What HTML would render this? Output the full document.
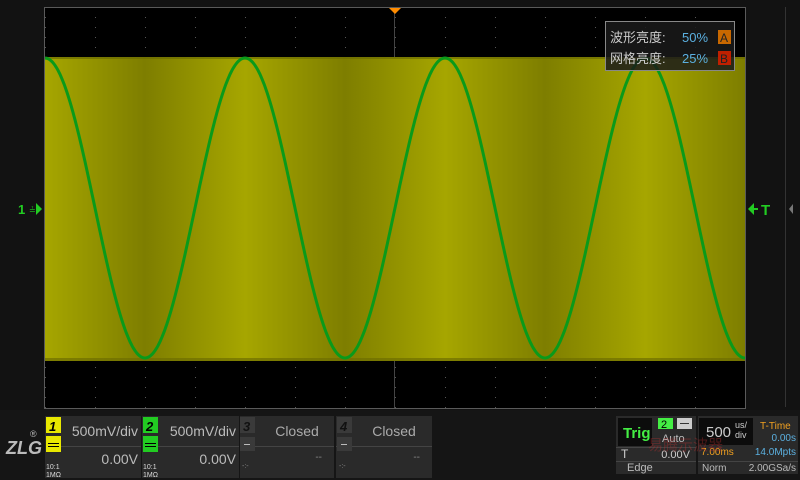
<!DOCTYPE html>
<html><head><meta charset="utf-8"><style>
body{margin:0;width:800px;height:480px;overflow:hidden;background:#111;}
svg{display:block}
text{font-family:"Liberation Sans","Noto Sans CJK SC",sans-serif}
</style></head><body>
<svg width="800" height="480" viewBox="0 0 800 480" xmlns="http://www.w3.org/2000/svg">
<defs>
<linearGradient id="band" x1="45" x2="245" y1="0" y2="0" gradientUnits="userSpaceOnUse" spreadMethod="repeat">
<stop offset="0" stop-color="#a6a600"/>
<stop offset="0.3" stop-color="#8e8e00"/>
<stop offset="0.5" stop-color="#7e7e00"/>
<stop offset="0.7" stop-color="#8e8e00"/>
<stop offset="1" stop-color="#a6a600"/>
</linearGradient>
<pattern id="vdots" x="45" y="7" width="50" height="10" patternUnits="userSpaceOnUse">
<rect x="0" y="0" width="1" height="1" fill="#555"/>
</pattern>
</defs>
<rect width="800" height="480" fill="#121212"/>
<rect x="785" y="7" width="1" height="400" fill="#333"/>
<polygon points="793,204 793,214 789,209" fill="#777"/>
<!-- screen -->
<rect x="44" y="7" width="702" height="402" fill="#5a5a5a"/>
<rect x="45" y="8" width="700" height="400" fill="#000"/>
<rect x="45" y="8" width="700" height="400" fill="url(#vdots)"/>
<rect x="394" y="8" width="1" height="400" fill="#444"/>
<rect x="45" y="57" width="700" height="304" fill="url(#band)"/>
<rect x="45" y="57" width="700" height="2" fill="#6e6e00" opacity="0.7"/>
<rect x="45" y="358" width="700" height="3" fill="#6e6e00" opacity="0.7"/>
<path id="sine" fill="none" stroke="#0a9a1a" stroke-width="3" d=""/>
<polygon points="389,8 401,8 395,14" fill="#ff8c00"/>
<!-- left markers -->
<text x="18" y="214" font-size="13" fill="#22cc22" font-weight="bold">1</text>
<text x="29" y="213" font-size="8" fill="#22cc22">≟</text>
<polygon points="36,203 42,209 36,215" fill="#22cc22"/>
<polygon points="748,209 754,203 754,215" fill="#22cc22"/>
<rect x="752" y="208" width="6" height="2" fill="#22cc22"/>
<text x="761" y="215" font-size="15" fill="#22cc22" font-weight="bold">T</text>
<!-- brightness popup -->
<rect x="605.5" y="21.5" width="129" height="49" fill="#1a1a1a" fill-opacity="0.85" stroke="#888"/>
<text x="610" y="42" font-size="13" fill="#ccc">波形亮度:</text>
<text x="682" y="42" font-size="13" fill="#5bb0e0">50%</text>
<rect x="718" y="30" width="13" height="14" fill="#c86800"/>
<text x="720" y="42" font-size="12" fill="#222">A</text>
<text x="610" y="63" font-size="13" fill="#ccc">网格亮度:</text>
<text x="682" y="63" font-size="13" fill="#5bb0e0">25%</text>
<rect x="718" y="51" width="13" height="14" fill="#c02000"/>
<text x="720" y="63" font-size="12" fill="#222">B</text>
<!-- bottom bar -->
<rect x="0" y="410" width="800" height="70" fill="#151515"/>
<text x="6" y="454" font-size="18" fill="#bbb" font-style="italic" font-weight="bold">ZLG</text>
<text x="30" y="437" font-size="9" fill="#bbb">®</text>
<!-- ch1 -->
<rect x="45" y="416" width="96" height="62" fill="#2a2a2a"/>
<rect x="61" y="446" width="80" height="1" fill="#444"/>
<rect x="46" y="417" width="15" height="16" fill="#e8e800"/>
<text x="49" y="431" font-size="13" fill="#000" font-style="italic" font-weight="bold">1</text>
<rect x="46" y="436" width="15" height="16" fill="#e8e800"/>
<rect x="48" y="443" width="11" height="1" fill="#000"/><rect x="48" y="446" width="11" height="1" fill="#000"/>
<text x="138" y="436" font-size="14" fill="#bbb" text-anchor="end">500mV/div</text>
<text x="138" y="464" font-size="14" fill="#bbb" text-anchor="end">0.00V</text>
<text x="46" y="469" font-size="7" fill="#ddd">10:1</text>
<text x="46" y="477" font-size="7" fill="#ddd">1MΩ</text>
<!-- ch2 -->
<rect x="142" y="416" width="97" height="62" fill="#2a2a2a"/>
<rect x="158" y="446" width="81" height="1" fill="#444"/>
<rect x="143" y="417" width="15" height="16" fill="#22cc22"/>
<text x="146" y="431" font-size="13" fill="#000" font-style="italic" font-weight="bold">2</text>
<rect x="143" y="436" width="15" height="16" fill="#22cc22"/>
<rect x="145" y="443" width="11" height="1" fill="#000"/><rect x="145" y="446" width="11" height="1" fill="#000"/>
<text x="236" y="436" font-size="14" fill="#bbb" text-anchor="end">500mV/div</text>
<text x="236" y="464" font-size="14" fill="#bbb" text-anchor="end">0.00V</text>
<text x="143" y="469" font-size="7" fill="#ddd">10:1</text>
<text x="143" y="477" font-size="7" fill="#ddd">1MΩ</text>
<!-- ch3 -->
<rect x="240" y="416" width="94" height="62" fill="#2a2a2a"/>
<rect x="240" y="446" width="94" height="1" fill="#444"/>
<rect x="240" y="417" width="15" height="16" fill="#3a3a3a"/>
<text x="243" y="431" font-size="13" fill="#111" font-style="italic" font-weight="bold">3</text>
<rect x="240" y="437" width="15" height="14" fill="#3a3a3a"/>
<rect x="244" y="444" width="6" height="1" fill="#bbb"/>
<text x="297" y="436" font-size="14" fill="#aaa" text-anchor="middle">Closed</text>
<text x="322" y="460" font-size="10" fill="#888" text-anchor="end">--</text>
<text x="242" y="468" font-size="7" fill="#888">-:-</text>
<!-- ch4 -->
<rect x="336" y="416" width="96" height="62" fill="#2a2a2a"/>
<rect x="336" y="446" width="96" height="1" fill="#444"/>
<rect x="337" y="417" width="15" height="16" fill="#3a3a3a"/>
<text x="340" y="431" font-size="13" fill="#111" font-style="italic" font-weight="bold">4</text>
<rect x="337" y="437" width="15" height="14" fill="#3a3a3a"/>
<rect x="341" y="444" width="6" height="1" fill="#bbb"/>
<text x="394" y="436" font-size="14" fill="#aaa" text-anchor="middle">Closed</text>
<text x="420" y="460" font-size="10" fill="#888" text-anchor="end">--</text>
<text x="339" y="468" font-size="7" fill="#888">-:-</text>
<!-- trigger -->
<rect x="616" y="416" width="80" height="58" fill="#2a2a2a"/>
<rect x="618" y="418" width="34" height="28" fill="#0c0c0c"/>
<text x="623" y="438" font-size="15" fill="#44ee44" font-weight="bold">Trig</text>
<rect x="658" y="418" width="15" height="11" fill="#44ee44"/>
<text x="661" y="428" font-size="11" fill="#000">2</text>
<rect x="677" y="418" width="15" height="11" fill="#ccc"/>
<rect x="680" y="423" width="9" height="1" fill="#333"/>
<text x="662" y="442" font-size="11" fill="#bbb">Auto</text>
<rect x="616" y="447" width="80" height="1" fill="#444"/>
<text x="621" y="458" font-size="12" fill="#ccc">T</text>
<text x="690" y="458" font-size="11" fill="#ccc" text-anchor="end">0.00V</text>
<rect x="616" y="461" width="80" height="1" fill="#444"/>
<text x="627" y="471" font-size="11" fill="#bbb">Edge</text>
<!-- timebase -->
<rect x="698" y="416" width="100" height="58" fill="#2a2a2a"/>
<rect x="699" y="418" width="54" height="27" fill="#0c0c0c"/>
<text x="706" y="437" font-size="15" fill="#ccc">500</text>
<text x="735" y="428" font-size="9" fill="#ccc">us/</text>
<text x="735" y="438" font-size="9" fill="#ccc">div</text>
<text x="760" y="429" font-size="10" fill="#f0a020">T-Time</text>
<text x="796" y="441" font-size="10" fill="#5bb0e0" text-anchor="end">0.00s</text>
<text x="701" y="455" font-size="10" fill="#f0a020">7.00ms</text>
<text x="796" y="455" font-size="10" fill="#5bb0e0" text-anchor="end">14.0Mpts</text>
<rect x="698" y="461" width="100" height="1" fill="#444"/>
<text x="702" y="471" font-size="10" fill="#bbb">Norm</text>
<text x="796" y="471" font-size="10" fill="#bbb" text-anchor="end">2.00GSa/s</text>
<text x="648" y="450" font-size="15" fill="#c03030" opacity="0.35">易腾示波器</text>
</svg>
<script>
var d="";for(var x=45;x<=745;x+=1){var y=208-150*Math.cos(2*Math.PI*(x-45)/200);d+=(x==45?"M":"L")+x+","+y.toFixed(1);}
document.getElementById("sine").setAttribute("d",d);
</script>
</body></html>
